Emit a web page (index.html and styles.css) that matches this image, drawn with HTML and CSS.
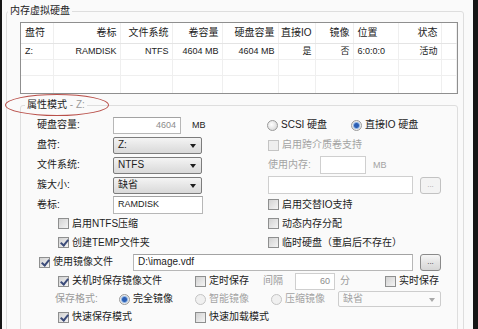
FILE: index.html
```html
<!DOCTYPE html>
<html lang="zh-CN">
<head>
    <meta charset="UTF-8">
    <meta name="viewport" content="width=device-width, initial-scale=1.0">
    <title>内存虚拟硬盘</title>
    <link rel="stylesheet" href="styles.css">
</head>
<body>

    <div class="window">
        <!-- 红色标注圈 -->
        <span class="mark"></span>

        <fieldset class="group disk-group">
            <legend>内存虚拟硬盘</legend>

            <!-- 硬盘列表 -->
            <div class="list">
                <table>
                    <colgroup>
                        <col style="width: 32px">
                        <col style="width: 67px">
                        <col style="width: 52px">
                        <col style="width: 50px">
                        <col style="width: 56px">
                        <col style="width: 37px">
                        <col style="width: 38px">
                        <col style="width: 45px">
                        <col style="width: 43px">
                        <col>
                    </colgroup>
                    <thead>
                        <tr>
                            <th class="l">盘符</th>
                            <th>卷标</th>
                            <th>文件系统</th>
                            <th>卷容量</th>
                            <th>硬盘容量</th>
                            <th>直接IO</th>
                            <th>镜像</th>
                            <th class="l">位置</th>
                            <th>状态</th>
                            <th></th>
                        </tr>
                    </thead>
                    <tbody>
                        <tr>
                            <td class="l">Z:</td>
                            <td>RAMDISK</td>
                            <td>NTFS</td>
                            <td>4604 MB</td>
                            <td>4604 MB</td>
                            <td>是</td>
                            <td>否</td>
                            <td class="l">6:0:0:0</td>
                            <td>活动</td>
                            <td></td>
                        </tr>
                        <tr><td></td><td></td><td></td><td></td><td></td><td></td><td></td><td></td><td></td><td></td></tr>
                        <tr><td></td><td></td><td></td><td></td><td></td><td></td><td></td><td></td><td></td><td></td></tr>
                    </tbody>
                </table>
            </div>

            <!-- 属性模式 -->
            <fieldset class="group prop-group">
                <legend>属性模式 <span class="dim">- Z:</span></legend>

                <div class="prop-top">
                    <div class="cell">
                        <span class="lbl">硬盘容量:</span>
                        <span class="input size">4604</span>
                        <span class="unit">MB</span>
                    </div>
                    <div class="cell side">
                        <span class="opt scsi"><span class="radio"></span>SCSI 硬盘</span>
                        <span class="opt"><span class="radio on"></span>直接IO 硬盘</span>
                    </div>

                    <div class="cell">
                        <span class="lbl">盘符:</span>
                        <span class="select">Z:</span>
                    </div>
                    <div class="cell side off">
                        <span class="opt"><span class="box"></span>启用跨介质卷支持</span>
                    </div>

                    <div class="cell">
                        <span class="lbl">文件系统:</span>
                        <span class="select">NTFS</span>
                    </div>
                    <div class="cell side off">
                        <span class="mem-lbl">使用内存:</span>
                        <span class="input mem"></span>
                        <span class="unit-mem">MB</span>
                    </div>

                    <div class="cell">
                        <span class="lbl">簇大小:</span>
                        <span class="select">缺省</span>
                    </div>
                    <div class="cell side off">
                        <span class="input path-off"></span>
                        <span class="btn">...</span>
                    </div>

                    <div class="cell">
                        <span class="lbl">卷标:</span>
                        <span class="input label">RAMDISK</span>
                    </div>
                    <div class="cell side">
                        <span class="opt"><span class="box"></span>启用交替IO支持</span>
                    </div>

                    <div class="cell sub">
                        <span class="opt"><span class="box"></span>启用NTFS压缩</span>
                    </div>
                    <div class="cell side">
                        <span class="opt"><span class="box"></span>动态内存分配</span>
                    </div>

                    <div class="cell sub">
                        <span class="opt"><span class="box on"></span>创建TEMP文件夹</span>
                    </div>
                    <div class="cell side">
                        <span class="opt"><span class="box"></span>临时硬盘（重启后不存在）</span>
                    </div>
                </div>

                <div class="prop-bottom">
                    <div class="line image-line">
                        <span class="opt image-opt"><span class="box on"></span>使用镜像文件</span>
                        <span class="input path">D:\image.vdf</span>
                        <span class="btn">...</span>
                    </div>

                    <div class="line">
                        <span class="opt col-a"><span class="box on"></span>关机时保存镜像文件</span>
                        <span class="opt col-b"><span class="box"></span>定时保存</span>
                        <span class="dim gap-lbl">间隔</span>
                        <span class="input interval">60</span>
                        <span class="dim minute">分</span>
                        <span class="opt"><span class="box"></span>实时保存</span>
                    </div>

                    <div class="line">
                        <span class="dim fmt-lbl">保存格式:</span>
                        <span class="opt fmt"><span class="radio on"></span>完全镜像</span>
                        <span class="opt fmt"><span class="radio"></span>智能镜像</span>
                        <span class="opt fmt short"><span class="radio"></span>压缩镜像</span>
                        <span class="select disabled">缺省</span>
                    </div>

                    <div class="line">
                        <span class="opt col-a"><span class="box on"></span>快速保存模式</span>
                        <span class="opt"><span class="box"></span>快速加载模式</span>
                    </div>
                </div>
            </fieldset>
        </fieldset>
    </div>

</body>
</html>
```

FILE: styles.css
```css
* {
    box-sizing: border-box;
}

body {
    margin: 0;
    background-color: #ffffff;
    font-family: "Liberation Sans", "Noto Sans CJK SC", sans-serif;
    font-size: 10px;
    line-height: 1;
    color: #1c1c1c;
}

.window {
    position: relative;
    width: 478px;
    height: 329px;
    overflow: hidden;
    background-color: #fafafa;
    border-left: 2px solid #161616;
    border-right: 5px solid #161616;
    padding: 5px 0 0 4px;
}

.mark {
    position: absolute;
    left: 3px;
    top: 94px;
    width: 104px;
    height: 22px;
    border: 1px solid #b9504a;
    border-radius: 50%;
    z-index: 2;
}

.group {
    margin: 0;
    padding: 0;
    min-width: 0;
    border: 1px solid #dedede;
    border-radius: 3px;
}

.group legend {
    padding: 0 2px;
    line-height: 12px;
}

.disk-group {
    width: 458px;
    height: 400px;
}

.disk-group > legend {
    margin-left: 1px;
}

.dim {
    color: #9a9a9a;
}

/* 列表 */
.list {
    margin: 5px 0 0 13px;
    width: 438px;
    height: 72px;
    border: 1px solid #8f8f8f;
    background-color: #ffffff;
    overflow: hidden;
}

.list table {
    width: 100%;
    table-layout: fixed;
    border-collapse: collapse;
}

.list th,
.list td {
    padding: 0 3px 0 0;
    text-align: right;
    white-space: nowrap;
    overflow: hidden;
    border-right: 1px solid #efefef;
    border-bottom: 1px solid #efefef;
}

.list th {
    height: 20px;
    font-weight: normal;
    font-size: 10px;
    border-bottom-color: #e4e4e4;
}

.list td {
    height: 16px;
    font-size: 9px;
}

.list tbody tr:last-child td {
    height: 19px;
}

.list .l {
    text-align: left;
    padding: 0 0 0 4px;
}

/* 属性模式 */
.prop-group {
    margin: 5px 0 0 13px;
    width: 438px;
    height: 240px;
}

.prop-group > legend {
    margin-left: 4px;
}

.prop-top {
    margin-top: 4px;
    display: grid;
    grid-template-columns: 247px 1fr;
    grid-template-rows: 20px 20px 20px 20px 19px 19px 19px;
}

.cell {
    display: flex;
    align-items: center;
    padding-left: 16px;
}

.cell.sub {
    padding-left: 37px;
}

.cell.side {
    padding-left: 0;
}

.off {
    color: #a3a3a3;
}

.lbl {
    width: 76px;
}

.unit {
    margin-left: 11px;
    font-size: 9px;
}

.opt {
    display: flex;
    align-items: center;
    white-space: nowrap;
}

.scsi {
    width: 84px;
    margin-left: -1px;
}

.mem-lbl {
    width: 52px;
}

.unit-mem {
    margin-left: 7px;
    font-size: 9px;
}

/* 控件 */
.input {
    display: flex;
    align-items: center;
    height: 18px;
    padding: 0 4px;
    background-color: #ffffff;
    border: 1px solid #b7b7b7;
    border-top-color: #a3a3a3;
    font-size: 9px;
}

.input.size {
    width: 68px;
    height: 17px;
    justify-content: flex-end;
    color: #8c8c8c;
}

.input.label {
    width: 90px;
}

.input.mem {
    width: 46px;
    border-color: #cfcfcf;
}

.input.path-off {
    width: 145px;
    border-color: #cfcfcf;
}

.input.path {
    width: 280px;
    height: 17px;
    font-size: 10px;
}

.input.interval {
    width: 40px;
    height: 17px;
    justify-content: flex-end;
    border-color: #cfcfcf;
    color: #8c8c8c;
}

.select {
    position: relative;
    display: flex;
    align-items: center;
    width: 89px;
    height: 17px;
    padding: 0 4px;
    border: 1px solid #7c7c7c;
    border-radius: 2px;
    background: linear-gradient(#f4f4f4, #e6e6e6 50%, #d9d9d9);
}

.select::after {
    content: "";
    position: absolute;
    right: 5px;
    top: 6px;
    border-left: 3px solid transparent;
    border-right: 3px solid transparent;
    border-top: 4px solid #1e1e1e;
}

.select.disabled {
    width: 103px;
    height: 16px;
    border-color: #cdcdcd;
    background: #fafafa;
    color: #a3a3a3;
}

.select.disabled::after {
    border-top-color: #a8a8a8;
}

.btn {
    display: flex;
    align-items: center;
    justify-content: center;
    width: 21px;
    height: 17px;
    margin-left: 7px;
    border: 1px solid #8a8a8a;
    border-radius: 3px;
    background: linear-gradient(#f6f6f6, #e4e4e4 50%, #d6d6d6);
    font-size: 8px;
    color: #333;
}

.off .btn {
    border-color: #c2c2c2;
    background: #f3f3f3;
    color: #a3a3a3;
}

/* 复选框 / 单选框 */
.box {
    position: relative;
    flex: none;
    width: 11px;
    height: 11px;
    margin-right: 3px;
    border: 1px solid #8e8f8f;
    background: linear-gradient(135deg, #d2d2d2, #f4f4f4);
}

.off .box {
    border-color: #c4c4c4;
    background: #eeeeee;
}

.box.on::after {
    content: "";
    position: absolute;
    left: 3px;
    top: 0;
    width: 3px;
    height: 6px;
    border-right: 2px solid #3c4c7a;
    border-bottom: 2px solid #3c4c7a;
    transform: rotate(40deg);
}

.radio {
    flex: none;
    width: 11px;
    height: 11px;
    margin-right: 3px;
    border: 1px solid #9a9a9a;
    border-radius: 50%;
    background: radial-gradient(circle at 40% 40%, #ffffff, #d0d0d0);
}

.radio.on {
    background: radial-gradient(circle, #2c5fb4 0, #2c5fb4 2px, #8fb4e4 3px, #eaeaea 4px);
}

/* 下半部分 */
.prop-bottom {
    display: flex;
    flex-direction: column;
}

.line {
    display: flex;
    align-items: center;
    height: 18px;
}

.image-line {
    height: 20px;
    padding-left: 18px;
}

.image-opt {
    width: 94px;
}

.col-a {
    width: 137px;
    margin-left: 37px;
}

.col-b {
    width: 68px;
}

.gap-lbl {
    width: 32px;
}

.minute {
    width: 45px;
    margin-left: 5px;
}

.fmt-lbl {
    width: 64px;
    margin-left: 34px;
}

.fmt {
    width: 76px;
}

.fmt:not(:nth-child(2)) {
    color: #a3a3a3;
}

.fmt:not(:nth-child(2)) .radio {
    border-color: #c4c4c4;
    background: #f0f0f0;
}

.fmt.short {
    width: 67px;
}
```
